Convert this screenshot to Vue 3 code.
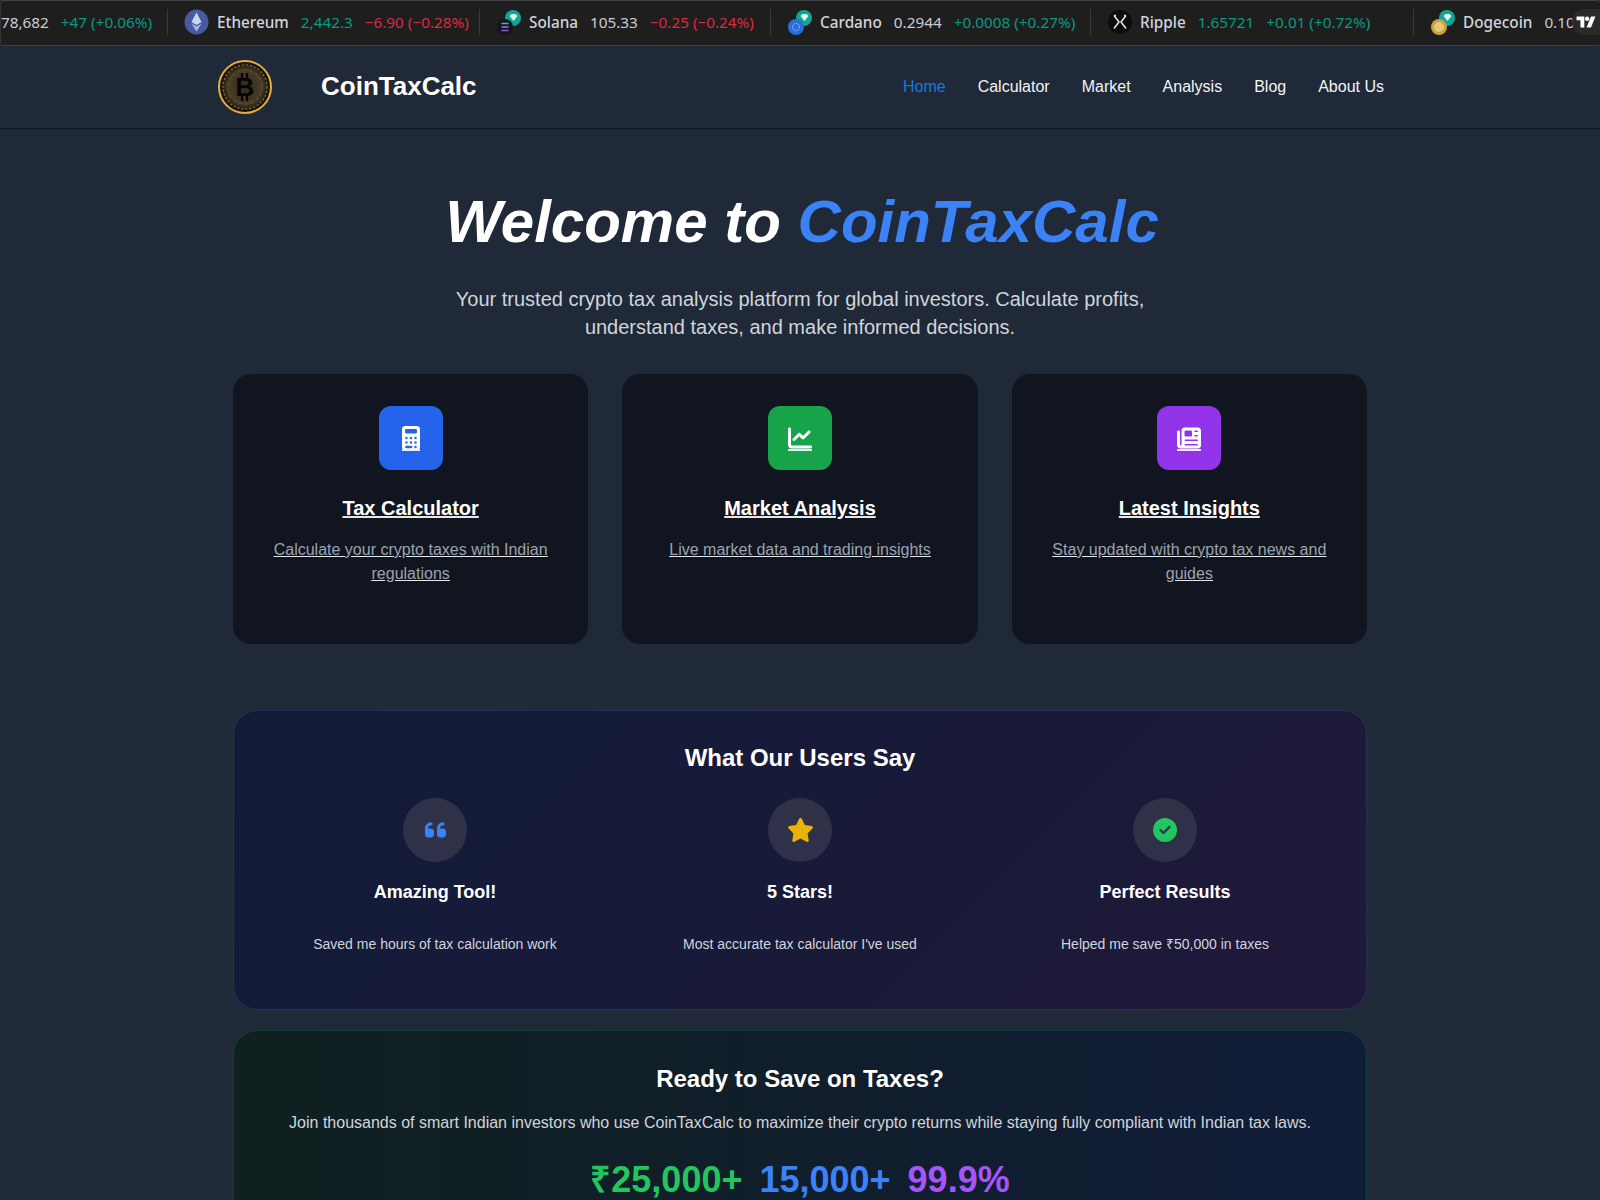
<template>
  <div class="page">
    <!-- ticker strip -->
    <div class="ticker">
      <div v-for="item in tickers" :key="item.name || 'first'" class="tick" :style="{ width: item.w + 'px' }">
        <svg v-if="item.icon" class="coin" viewBox="0 0 26 26">
          <template v-if="item.icon === 'eth'">
            <ellipse cx="12.500" cy="13" rx="12" ry="12.500" fill="#4a5a9f" />
            <path d="M12.500 3.500l5 9.500-5 3-5-3z" fill="#c8d6f0" />
            <path d="M12.500 17.500l5-3-5 8-5-8z" fill="#9fc0ea" />
          </template>
          <template v-else-if="item.icon === 'xrp'">
            <circle cx="13" cy="13" r="12" fill="#0d0d0f" />
            <path d="M7 6.500l5 6.500-5 6.500M19 6.500l-5 6.500 5 6.500M7 6.500h2M17 6.500h2" stroke="#e8e8e8" stroke-width="1.500" fill="none" />
          </template>
          <template v-else>
            <circle cx="17" cy="9" r="8" fill="#12a594" />
            <path d="M13.500 7l2-2h4l2 2-4 5z" fill="#d9f5f0" />
            <circle cx="9" cy="18" r="8" :fill="item.base" />
            <template v-if="item.icon === 'sol'">
              <path d="M5.500 14.500h7" stroke="#4fb0d8" stroke-width="1.500" />
              <path d="M5.500 18h7" stroke="#7a86e0" stroke-width="1.500" />
              <path d="M5.500 21.500h7" stroke="#a04fe0" stroke-width="1.500" />
            </template>
            <circle v-if="item.icon === 'ada'" cx="9" cy="18" r="3.500" fill="none" stroke="#cfe0ff" stroke-width="1" stroke-dasharray="1 1" />
            <circle v-if="item.icon === 'doge'" cx="9" cy="18" r="5" fill="#e6c67a" />
          </template>
        </svg>
        <span v-if="item.name" class="t-name">{{ item.name }}</span>
        <span class="t-price" :class="item.priceCls">{{ item.price }}</span>
        <span class="t-change" :class="item.cls">{{ item.change }}</span>
      </div>
      <div class="tv-badge">
        <svg viewBox="0 0 36 24" width="20" height="14">
          <path d="M1 2h14v20H8V9H1z" fill="#fff" />
          <circle cx="20" cy="6" r="4" fill="#fff" />
          <path d="M27 2h8l-8 20h-8z" fill="#fff" />
        </svg>
      </div>
    </div>

    <!-- nav -->
    <header class="nav">
      <div class="nav-inner">
        <div class="brand">
          <svg class="logo" viewBox="0 0 58 58">
            <defs>
              <radialGradient id="coinFill" cx="50%" cy="50%" r="50%">
                <stop offset="0%" stop-color="#2e271a" />
                <stop offset="65%" stop-color="#4a3d28" />
                <stop offset="90%" stop-color="#1a160d" />
                <stop offset="100%" stop-color="#120f09" />
              </radialGradient>
            </defs>
            <circle cx="29" cy="29" r="26" fill="url(#coinFill)" stroke="#e3b043" stroke-width="2" />
            <circle cx="29" cy="29" r="22" fill="none" stroke="#8d743c" stroke-width="1.200" stroke-dasharray="2 2" />
            <circle cx="29" cy="29" r="17" fill="none" stroke="#6b5732" stroke-width="1" stroke-dasharray="3 3" />
            <path d="M26 15v5M31 15v5M26 38v5M31 38v5" stroke="#050505" stroke-width="2.200" />
            <text x="29" y="38" text-anchor="middle" class="logo-b">B</text>
          </svg>
          <a class="brand-name">CoinTaxCalc</a>
        </div>
        <nav class="links">
          <a v-for="(l, i) in links" :key="l" :class="{ active: i === 0 }">{{ l }}</a>
        </nav>
      </div>
    </header>

    <main class="main">
      <section class="hero">
        <h1>Welcome to <span>CoinTaxCalc</span></h1>
        <p>Your trusted crypto tax analysis platform for global investors. Calculate profits,<br />understand taxes, and make informed decisions.</p>
      </section>

      <section class="cards">
        <a v-for="c in cards" :key="c.title" class="card">
          <div class="card-icon" :class="c.color">
            <span class="glyph">
              <svg :viewBox="c.box" :width="c.w" height="24"><path :d="c.path" fill="#fff" :fill-rule="c.rule || 'nonzero'" /></svg>
            </span>
          </div>
          <h3>{{ c.title }}</h3>
          <p>{{ c.text }}</p>
        </a>
      </section>

      <section class="users">
        <h2>What Our Users Say</h2>
        <div class="user-grid">
          <div v-for="u in users" :key="u.title" class="user">
            <div class="user-icon">
              <svg :viewBox="u.box" :width="u.w" height="24"><path :d="u.path" :fill="u.fill" /></svg>
            </div>
            <h4>{{ u.title }}</h4>
            <p>{{ u.text }}</p>
          </div>
        </div>
      </section>

      <section class="cta">
        <h2>Ready to Save on Taxes?</h2>
        <p>Join thousands of smart Indian investors who use CoinTaxCalc to maximize their crypto returns while staying fully compliant with Indian tax laws.</p>
        <div class="stats">
          <span class="green">₹25,000+</span>
          <span class="blue">15,000+</span>
          <span class="purple">99.9%</span>
        </div>
      </section>
    </main>
  </div>
</template>

<script setup>
const tickers = [
  { name: "", price: "78,682", change: "+47 (+0.06%)", cls: "up", w: 167 },
  { icon: "eth", name: "Ethereum", price: "2,442.3", priceCls: "up", change: "−6.90 (−0.28%)", cls: "down", w: 312 },
  { icon: "sol", base: "#15151a", name: "Solana", price: "105.33", change: "−0.25 (−0.24%)", cls: "down", w: 291 },
  { icon: "ada", base: "#2a6fd6", name: "Cardano", price: "0.2944", change: "+0.0008 (+0.27%)", cls: "up", w: 320 },
  { icon: "xrp", name: "Ripple", price: "1.65721", priceCls: "up", change: "+0.01 (+0.72%)", cls: "up", w: 323 },
  { icon: "doge", base: "#c9a13f", name: "Dogecoin", price: "0.10", change: "", cls: "", w: 187 },
];

const links = ["Home", "Calculator", "Market", "Analysis", "Blog", "About Us"];

const dots = [96, 192, 288]
  .flatMap((x) => [256, 352].map((y) => `M${x} ${y - 26}a26 26 0 1 0 0 52a26 26 0 1 0 0-52z`))
  .join("");

const cards = [
  {
    title: "Tax Calculator",
    text: "Calculate your crypto taxes with Indian regulations",
    color: "blue",
    box: "0 0 384 512",
    w: 18,
    rule: "evenodd",
    path:
      "M64 0C28.700 0 0 28.700 0 64V448c0 35.300 28.700 64 64 64H320c35.300 0 64-28.700 64-64V64c0-35.300-28.700-64-64-64H64zM96 64H288c17.700 0 32 14.300 32 32v32c0 17.700-14.300 32-32 32H96c-17.700 0-32-14.300-32-32V96c0-17.700 14.300-32 32-32z" +
      dots +
      "M92 422H196c14 0 26 12 26 26s-12 26-26 26H92c-14 0-26-12-26-26s12-26 26-26zM288 422a26 26 0 1 0 0 52a26 26 0 1 0 0-52z",
  },
  {
    title: "Market Analysis",
    text: "Live market data and trading insights",
    color: "green",
    box: "0 0 512 512",
    w: 24,
    path: "M64 64c0-17.700-14.300-32-32-32S0 46.300 0 64V400c0 44.200 35.800 80 80 80H480c17.700 0 32-14.300 32-32s-14.300-32-32-32H80c-8.800 0-16-7.200-16-16V64zm406.600 86.600c12.500-12.500 12.500-32.800 0-45.300s-32.800-12.500-45.300 0L320 210.700l-57.400-57.400c-12.500-12.500-32.800-12.500-45.300 0l-112 112c-12.500 12.500-12.500 32.800 0 45.300s32.800 12.500 45.300 0L240 221.300l57.400 57.400c12.500 12.500 32.800 12.500 45.300 0l128-128z",
  },
  {
    title: "Latest Insights",
    text: "Stay updated with crypto tax news and guides",
    color: "purple",
    box: "0 0 512 512",
    w: 24,
    path: "M96 96c0-35.300 28.700-64 64-64H448c35.300 0 64 28.700 64 64V416c0 35.300-28.700 64-64 64H80c-44.200 0-80-35.800-80-80V128c0-17.700 14.300-32 32-32s32 14.300 32 32V400c0 8.800 7.200 16 16 16s16-7.200 16-16V96zm64 24v80c0 13.300 10.700 24 24 24H296c13.300 0 24-10.700 24-24V120c0-13.300-10.700-24-24-24H184c-13.300 0-24 10.700-24 24zm208-8c0 8.800 7.200 16 16 16h48c8.800 0 16-7.200 16-16s-7.200-16-16-16H384c-8.800 0-16 7.200-16 16zm0 96c0 8.800 7.200 16 16 16h48c8.800 0 16-7.200 16-16s-7.200-16-16-16H384c-8.800 0-16 7.200-16 16zM160 304c0 8.800 7.200 16 16 16H432c8.800 0 16-7.200 16-16s-7.200-16-16-16H176c-8.800 0-16 7.200-16 16zm0 96c0 8.800 7.200 16 16 16H432c8.800 0 16-7.200 16-16s-7.200-16-16-16H176c-8.800 0-16 7.200-16 16z",
  },
];

const users = [
  {
    title: "Amazing Tool!",
    text: "Saved me hours of tax calculation work",
    box: "0 0 448 512",
    w: 21,
    fill: "#3b82f6",
    path: "M0 216C0 149.700 53.700 96 120 96h8c17.700 0 32 14.300 32 32s-14.300 32-32 32h-8c-30.900 0-56 25.100-56 56v8h64c35.300 0 64 28.700 64 64v64c0 35.300-28.700 64-64 64H64c-35.300 0-64-28.700-64-64V320 288 216zm256 0c0-66.300 53.700-120 120-120h8c17.700 0 32 14.300 32 32s-14.300 32-32 32h-8c-30.900 0-56 25.100-56 56v8h64c35.300 0 64 28.700 64 64v64c0 35.300-28.700 64-64 64H320c-35.300 0-64-28.700-64-64V320 288 216z",
  },
  {
    title: "5 Stars!",
    text: "Most accurate tax calculator I've used",
    box: "0 0 576 512",
    w: 27,
    fill: "#eab308",
    path: "M316.900 18C311.600 7 300.400 0 288.100 0s-23.400 7-28.800 18L195 150.300 51.400 171.500c-12 1.800-22 10.200-25.700 21.700s-.7 24.200 7.900 32.700L137.800 329 113.200 474.700c-2 12 3 24.200 12.900 31.300s23 8 33.800 2.300l128.300-68.500 128.300 68.500c10.800 5.700 23.900 4.900 33.800-2.300s14.900-19.300 12.900-31.300L438.500 329 542.700 225.900c8.600-8.500 11.700-21.200 7.900-32.700s-13.700-19.900-25.700-21.700L381.200 150.300 316.900 18z",
  },
  {
    title: "Perfect Results",
    text: "Helped me save ₹50,000 in taxes",
    box: "0 0 512 512",
    w: 24,
    fill: "#22c55e",
    path: "M256 512A256 256 0 1 0 256 0a256 256 0 1 0 0 512zM369 209L241 337c-9.400 9.400-24.600 9.400-33.900 0l-64-64c-9.400-9.400-9.400-24.600 0-33.900s24.600-9.400 33.900 0l47 47L335 175c9.400-9.400 24.600-9.400 33.900 0s9.400 24.600 0 33.900z",
  },
];
</script>

<style>
html,
body {
  background: #1f2937;
  overflow: hidden;
}
</style>

<style scoped>
.page {
  height: 1200px;
  overflow: hidden;
  background: #1f2937;
  color: #fff;
  font-family: "Liberation Sans", Arial, sans-serif;
}

/* ticker */
.ticker {
  position: relative;
  display: flex;
  height: 46px;
  box-sizing: border-box;
  background: #1e1e1e;
  border: 1px solid #434343;
  border-left-color: #333;
  border-right: none;
  border-radius: 3px;
  overflow: hidden;
  font-family: "Noto Sans", Lato, sans-serif;
  font-size: 15.3px;
  color: #c9ccd3;
}
.tick {
  flex: none;
  display: flex;
  align-items: center;
  gap: 12px;
  box-sizing: border-box;
  height: 26px;
  margin-top: 8px;
  padding-left: 16px;
  border-right: 1px solid #3a3a3a;
  white-space: nowrap;
}
.tick:first-child {
  padding-left: 0;
}
.tick:last-of-type {
  border-right: none;
  overflow: hidden;
}
.coin {
  width: 26px;
  height: 26px;
  flex: none;
  margin-right: -5px;
}
.t-name {
  font-weight: 500;
  color: #d1d4dc;
}
.up {
  color: #089981;
}
.down {
  color: #dc2a3e;
}
.tv-badge {
  position: absolute;
  right: 0;
  top: 8px;
  width: 28px;
  height: 26px;
  display: flex;
  align-items: center;
  justify-content: center;
  background: #2a2a2a;
  border-radius: 13px 0 0 13px;
}

/* nav */
.nav {
  height: 83px;
  box-sizing: border-box;
  border-bottom: 1px solid #0f1522;
  background: #1f2937;
}
.nav-inner {
  width: 1168px;
  height: 100%;
  margin: 0 auto;
  display: flex;
  align-items: center;
  justify-content: space-between;
}
.brand {
  display: flex;
  align-items: center;
  gap: 47px;
}
.logo {
  width: 58px;
  height: 58px;
}
.logo-b {
  font: 700 26px "Liberation Sans", Arial, sans-serif;
  fill: #050505;
}
.brand-name {
  font-size: 26px;
  line-height: 30px;
  margin-top: -2px;
  font-weight: 700;
}
.links {
  display: flex;
  gap: 32px;
  font-size: 16px;
}
.links a {
  color: #f3f4f6;
}
.links a.active {
  color: #1877e6;
}

/* main */
.main {
  width: 1134px;
  margin: 0 auto;
}
.hero {
  padding-top: 63px;
  text-align: center;
}
.hero h1 {
  margin: 0;
  padding-left: 4px;
  font-size: 60px;
  line-height: 60px;
  font-style: italic;
  font-weight: 700;
}
.hero h1 span {
  color: #3b82f6;
}
.hero p {
  margin: 33px 0 33px;
  font-size: 20px;
  line-height: 28px;
  color: #d1d5db;
}
.cards {
  display: grid;
  grid-template-columns: repeat(3, 1fr);
  gap: 34px;
}
.card {
  box-sizing: border-box;
  height: 270px;
  padding: 32px 32px 0;
  background: #10151f;
  border-radius: 18px;
  text-align: center;
  text-decoration: underline;
  color: #e5e7eb;
}
.card-icon {
  width: 64px;
  height: 64px;
  margin: 0 auto;
  border-radius: 12px;
  display: flex;
  align-items: center;
  justify-content: center;
}
.card-icon.blue {
  background: #2563eb;
}
.card-icon.green {
  background: #16a34a;
}
.card-icon.purple {
  background: #9333ea;
}
.glyph {
  position: relative;
  display: block;
  height: 24px;
}
.glyph svg {
  display: block;
}
.glyph::after {
  content: "";
  position: absolute;
  left: 0;
  right: 0;
  top: 23px;
  height: 2px;
  background: #e6f0f2;
}
.card h3 {
  margin: 24px 0 0;
  font-size: 20px;
  line-height: 28px;
  font-weight: 700;
  color: #fff;
}
.card p {
  margin: 16px 0 0;
  font-size: 16px;
  line-height: 24px;
  color: #9ca3af;
  text-decoration: underline;
  text-decoration-color: #e5e7eb;
}

/* what users say */
.users {
  box-sizing: border-box;
  height: 300px;
  margin-top: 66px;
  padding: 31px 32px 0;
  border: 1px solid #263158;
  border-radius: 24px;
  background: linear-gradient(135deg, #111c38, #191a38 60%, #21183a);
  text-align: center;
}
.users h2,
.cta h2 {
  margin: 0;
  font-size: 24px;
  line-height: 32px;
  font-weight: 700;
}
.user-grid {
  display: grid;
  grid-template-columns: repeat(3, 338px);
  gap: 27px;
  margin-top: 24px;
}
.user-icon {
  width: 64px;
  height: 64px;
  margin: 0 auto;
  border-radius: 50%;
  background: #2e3148;
  display: flex;
  align-items: center;
  justify-content: center;
}
.user h4 {
  margin: 16px 0 0;
  font-size: 18px;
  line-height: 28px;
  font-weight: 700;
}
.user p {
  margin: 28px 0 0;
  font-size: 14px;
  line-height: 20px;
  color: #d1d5db;
}

/* cta */
.cta {
  box-sizing: border-box;
  height: 300px;
  margin-top: 20px;
  padding: 32px 32px 0;
  border: 1px solid #15403a;
  border-radius: 24px;
  background: linear-gradient(90deg, #10201f, #111c38);
  text-align: center;
}
.cta p {
  margin: 16px 0 0;
  font-size: 16px;
  line-height: 24px;
  color: #d1d5db;
}
.stats {
  display: flex;
  justify-content: center;
  gap: 17px;
  margin-top: 25px;
  font-size: 36px;
  line-height: 40px;
  font-weight: 700;
}
.green {
  color: #22c55e;
}
.blue {
  color: #3b82f6;
}
.purple {
  color: #a855f7;
}
</style>
